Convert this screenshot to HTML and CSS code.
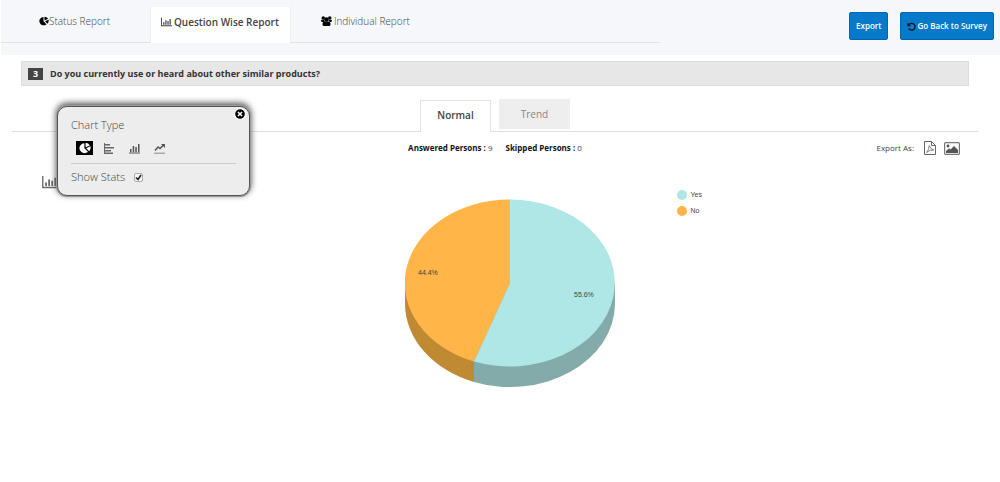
FILE: index.html
```html
<!DOCTYPE html>
<html lang="en">
<head>
<meta charset="utf-8">
<title>Question Wise Report</title>
<link rel="stylesheet" href="styles.css">
</head>
<body>
<svg class="defs" aria-hidden="true">
  <symbol id="pie" viewBox="0 0 16 16"><path fill="currentColor" d="M7.200 1.500A6.700 6.700 0 1 0 12 13L7.200 8.200ZM8.800 1A6.800 6.800 0 0 1 14.500 4.500L8.800 7ZM9.500 8.200L15.300 5.800A6.800 6.800 0 0 1 13.600 12.200Z"/></symbol>
  <symbol id="bars" viewBox="0 0 18 16"><path fill="currentColor" d="M0 1h1.500v12.500H18V15H0zM3.500 8.500h2v4h-2zM7 5h2v7.500H7zM10.500 6.500h2v6h-2zM14 3h2v9.500h-2z"/></symbol>
</svg>
<header class="top">
  <nav class="nav">
    <a class="nav-tab first" href="#status"><svg class="ico10"><use href="#pie"/></svg>Status Report</a>
    <a class="nav-tab active" href="#question"><svg class="ico-bars"><use href="#bars"/></svg>Question Wise Report</a>
    <a class="nav-tab last" href="#individual"><svg class="ico-users" viewBox="0 0 22 20"><g fill="currentColor"><circle cx="4.500" cy="4" r="3.500"/><circle cx="17.500" cy="4" r="3.500"/><circle cx="11" cy="7" r="4.600"/><path d="M0 8q4-1 6 0 0 3 2 4H2q-2 0-2-4zM22 8q-4-1-6 0 0 3-2 4h6q2 0 2-4zM3 17q0-6 4.500-6.300 3.500 1 7 0Q19 11 19 17q0 3-3 3H6q-3 0-3-3z"/></g></svg>Individual Report</a>
  </nav>
  <div class="actions">
    <button class="btn" type="button">Export</button>
    <button class="btn" type="button"><svg class="ico-undo" viewBox="0 0 16 16"><path d="M3.200 5.200A6 6 0 1 1 3 11.200" fill="none" stroke="#0b1420" stroke-width="2.400"/><path d="M.5 1v6.500H7z" fill="#0b1420"/></svg>Go Back to Survey</button>
  </div>
</header>
<main>
  <h1 class="question"><span class="num">3</span>Do you currently use or heard about other similar products?</h1>
  <section class="report">
    <div class="tabs" role="tablist">
      <button class="tab selected" type="button" role="tab" aria-selected="true">Normal</button>
      <button class="tab" type="button" role="tab" aria-selected="false">Trend</button>
    </div>
    <div class="meta">
      <p class="counts"><span><b>Answered Persons :</b> 9</span><span><b>Skipped Persons :</b> 0</span></p>
      <div class="export">
        <span class="export-label">Export As:</span>
        <button class="icon-btn" type="button" aria-label="PDF"><svg class="ico-pdf" viewBox="0 0 12 14"><path d="M.5.5h7l4 4v9H.5zM7.500.5v4h4" fill="none" stroke="#666"/><path d="M5.300 4.500q.8 3.500 4.500 4.500Q6 8.500 2.500 11.500 5 9 5.300 4.500z" fill="none" stroke="#666" stroke-width=".8"/></svg></button>
        <button class="icon-btn" type="button" aria-label="Image"><svg class="ico-img" viewBox="0 0 16 13"><rect x=".6" y=".6" width="14.800" height="11.800" rx="1" fill="none" stroke="#777" stroke-width="1.200"/><circle cx="4" cy="4" r="1.400" fill="#555"/><path d="M2 11V9l3-2.500 1.500 1L10 4l4 4v3z" fill="#555"/></svg></button>
      </div>
    </div>
    <div class="chart">
      <button class="icon-btn chart-btn" type="button" aria-label="Chart settings"><svg class="ico-chart"><use href="#bars"/></svg></button>
      <svg class="pie" viewBox="0 0 210 189" role="img" aria-label="Yes 55.6%, No 44.4%">
        <path fill="#c08a33" d="M0 84v21A105 83.500 0 0 0 69 183V84z"/>
        <path fill="#83abaa" d="M210 84v21A105 83.500 0 0 1 69 183V84z"/>
        <path fill="#ffb547" d="M105 84V.5A105 83.500 0 0 0 69 162.500z"/>
        <path fill="#aee7e5" d="M105 84V.5A105 83.500 0 1 1 69 162.500z"/>
        <text class="pct" x="13" y="76">44.4%</text>
        <text class="pct" x="169" y="98">55.6%</text>
      </svg>
      <ul class="legend"><li class="yes">Yes</li><li class="no">No</li></ul>
    </div>
    <aside class="popup">
      <button class="icon-btn close" type="button" aria-label="Close"><svg class="ico-close" viewBox="0 0 14 14"><circle cx="7" cy="7" r="6.300" fill="#000" stroke="#fff" stroke-width="1.400"/><path d="M4.600 4.600l4.800 4.800M9.400 4.600l-4.800 4.800" stroke="#fff" stroke-width="1.700"/></svg></button>
      <h2 class="popup-title">Chart Type</h2>
      <div class="types">
        <button class="icon-btn type on" type="button" aria-label="Pie"><svg class="ico12"><use href="#pie"/></svg></button>
        <button class="icon-btn type" type="button" aria-label="Bar"><svg class="ico-type" viewBox="0 0 11 11"><path d="M0 0h1v11H0zM1 1h5v1.500H1zM1 4h9v1.500H1zM1 7h6v1.500H1zM1 9.500h8V11H1z" fill="#666"/></svg></button>
        <button class="icon-btn type" type="button" aria-label="Column"><svg class="ico-type" viewBox="0 0 11 11"><path d="M0 9.500h11v1H0zM1 6h1.500v3H1zM3.700 3h1.500v6H3.700zM6.300 4h1.500v5H6.300zM9 1h1.500v8H9z" fill="#555"/></svg></button>
        <button class="icon-btn type" type="button" aria-label="Line"><svg class="ico-type" viewBox="0 0 11 11"><path d="M0 9.700h11v1H0z" fill="#888"/><path d="M1 7.500L4 4l2 1.500L9.500 2" fill="none" stroke="#555" stroke-width="1.500"/><path d="M7 1h4v4z" fill="#555"/></svg></button>
      </div>
      <div class="stats"><label for="stats">Show Stats</label><span class="check-wrap"><input class="check" id="stats" type="checkbox" checked><svg class="tick" viewBox="0 0 9 9"><path d="M2 4.500l2 2 3-4.500" fill="none" stroke="#222" stroke-width="1.600"/></svg></span></div>
    </aside>
  </section>
</main>
</body>
</html>
```
FILE: styles.css
```css
* { box-sizing: border-box; }
body { margin: 0; background: #fff; color: #444; font: 10px/14px "Open Sans", sans-serif; }
h1, h2, p, ul { margin: 0; padding: 0; }
button { font: inherit; cursor: pointer; }
svg { display: block; flex: none; }
.defs { position: absolute; width: 0; height: 0; }

.top { display: flex; justify-content: space-between; margin-left: 1px; padding: 7px 6px 12px 0; background: #f6f7fa; }
.nav { display: flex; flex: 0 1 659px; }
.nav-tab { display: flex; align-items: center; height: 36px; padding: 0 11px 7px; border-bottom: 1px solid #e2e2e2; color: #444; font-weight: 300; text-decoration: none; white-space: nowrap; }
.first { flex: 0 0 149px; padding-left: 38px; }
.active { flex: 0 0 140px; background: #fff; border: 1px solid #eee; border-width: 0 1px; color: #444; font-weight: 600; padding-left: 10px; gap: 2px; }
.last { flex: 1; padding-left: 30px; gap: 2px; }
.ico10 { width: 10px; height: 10px; color: #000; }
.ico-bars { width: 11px; height: 10px; }
.ico-users { width: 11px; height: 10px; color: #000; }
.actions { display: flex; align-items: flex-start; gap: 12px; padding-top: 5px; }
.btn { display: flex; align-items: center; gap: 1px; height: 28px; padding: 0 6px; border: 1px solid #0465aa; border-radius: 2px; background: #057acb; color: #fff; font-size: 8px; font-weight: 600; white-space: nowrap; }
.ico-undo { width: 9px; height: 9px; }

main { padding: 6px 22px 0 12px; }
.question { display: flex; align-items: center; gap: 7px; height: 25px; margin: 0 9px; padding: 0 6px; border: 1px solid #ddd; background: #e7e7e7; color: #333; font-size: 9px; font-weight: 700; }
.num { width: 15px; height: 12px; background: #444; color: #fff; line-height: 12px; text-align: center; }

.report { position: relative; padding-top: 13px; }
.tabs { display: flex; align-items: flex-start; justify-content: center; gap: 8px; border-bottom: 1px solid #ddd; }
.tab { width: 71px; height: 30px; margin-bottom: 2px; padding: 0; border: 0; background: #eee; color: #888; }
.selected { height: 32px; margin: 1px 0 -1px; padding-bottom: 4px; border: 1px solid #e4e4e4; border-bottom: 0; background: #fff; color: #444; font-weight: 600; }
.meta { display: grid; grid-template-columns: 1fr auto 1fr; align-items: center; height: 32px; }
.counts { display: flex; grid-column: 2; gap: 13px; font-size: 8px; }
.counts b { color: #111; }
.export { display: flex; justify-content: flex-end; align-items: center; gap: 8px; padding-right: 18px; font-size: 8px; }
.icon-btn { padding: 0; border: 0; background: none; color: #666; }
.export-label { padding-right: 2px; }
.ico-pdf { width: 12px; height: 14px; }
.ico-img { width: 16px; height: 13px; }

.chart { display: grid; grid-template-columns: 1fr 210px 1fr; align-items: start; gap: 62px; padding: 11px 0 0 29px; }
.chart-btn { justify-self: start; padding-left: 1px; }
.ico-chart { width: 16px; height: 14px; }
.pie { width: 210px; height: 189px; margin-top: 24px; }
.pct { font: 7px "Liberation Sans", sans-serif; fill: #444; }
.legend { margin-top: 12px; list-style: none; font: 7px/16px "Liberation Sans", sans-serif; }
.legend li { display: flex; align-items: center; gap: 4px; }
.legend li::before { content: ""; width: 10px; height: 10px; border-radius: 50%; }
.yes::before { background: #aee7e5; }
.no::before { background: #ffb547; }

.popup { position: absolute; top: 20px; left: 45px; width: 193px; padding: 11px 13px 11px; border: 1px solid #555; border-radius: 10px; background: #ededed; box-shadow: 0 0 0 1px #999, 0 -2px 6px 1px #555; }
.close { position: absolute; top: 1px; right: 3px; }
.ico-close { width: 12px; height: 12px; }
.popup-title { font-size: 11px; font-weight: 300; }
.types { display: flex; gap: 8px; padding: 9px 0 8px 5px; border-bottom: 1px solid #ccc; }
.type { display: flex; align-items: center; justify-content: center; width: 17px; height: 14px; }
.on { background: #000; color: #fff; }
.ico12 { width: 12px; height: 12px; }
.ico-type { width: 11px; height: 11px; }
.stats { display: flex; align-items: center; gap: 9px; padding-top: 6px; font-size: 11px; font-weight: 300; }
.check-wrap { display: grid; }
.check { grid-area: 1 / 1; appearance: none; width: 9px; height: 9px; margin: 0; border: 1px solid #aaa; border-radius: 2px; background: #f8f8f8; }
.tick { grid-area: 1 / 1; width: 9px; height: 9px; visibility: hidden; pointer-events: none; z-index: 1; }
.check:checked + .tick { visibility: visible; }
```
